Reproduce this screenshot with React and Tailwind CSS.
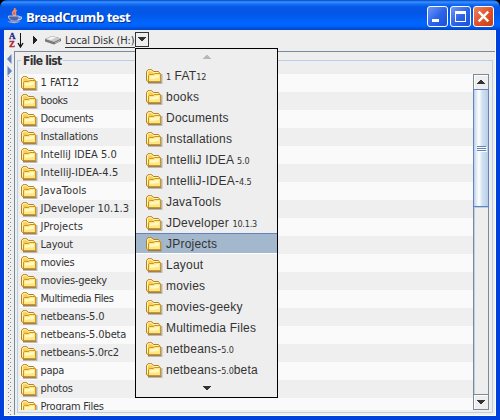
import React from 'react';

const files = [
  { name: '1 FAT12', track: 'tracking-[0px]' },
  { name: 'books', track: 'tracking-[-0.45px]' },
  { name: 'Documents', track: 'tracking-[-0.4px]' },
  { name: 'Installations', track: 'tracking-[-0.2px]' },
  { name: 'IntelliJ IDEA 5.0', track: 'tracking-[0.02px]' },
  { name: 'IntelliJ-IDEA-4.5', track: 'tracking-[0.1px]' },
  { name: 'JavaTools', track: 'tracking-[0.1px]' },
  { name: 'JDeveloper 10.1.3', track: 'tracking-[0px]' },
  { name: 'JProjects', track: 'tracking-[0.05px]' },
  { name: 'Layout', track: 'tracking-[-0.2px]' },
  { name: 'movies', track: 'tracking-[-0.3px]' },
  { name: 'movies-geeky', track: 'tracking-[-0.2px]' },
  { name: 'Multimedia Files', track: 'tracking-[-0.43px]' },
  { name: 'netbeans-5.0', track: 'tracking-[-0.12px]' },
  { name: 'netbeans-5.0beta', track: 'tracking-[-0.12px]' },
  { name: 'netbeans-5.0rc2', track: 'tracking-[-0.18px]' },
  { name: 'papa', track: 'tracking-[-0.3px]' },
  { name: 'photos', track: 'tracking-[-0.25px]' },
  { name: 'Program Files', track: 'tracking-[-0.25px]' },
];

function Folder() {
  return (
    <svg width="17" height="15" viewBox="0 0 17 15" className="block shrink-0">
      <path d="M2 14.2H15.8V5" stroke="#aaa79c" strokeWidth="1.2" fill="none" />
      <path d="M.5 11.5V2.5L2 .7H5.8L7.5 2.5H12.5L13.5 4V12.5H1.5Z" fill="#f8cf55" stroke="#b9801a" />
      <path d="M1.5 10.5V3L2.5 1.7H5.4L7.2 3.5H12.5" fill="none" stroke="#fff6c4" />
      <path d="M2.5 12.7V6.5L3.5 5.5H7.5L8.6 4.5H14.5V12.7Z" fill="#ffd95c" stroke="#c99526" />
      <path d="M3 12.2V7.2L4.2 6H8L9 5H14V12.2Z" fill="#ffe680" />
      <path d="M4 10V7H8.5L9.5 6H13V9Z" fill="#fff8c0" />
      <path d="M2 13.2H15" stroke="#94641a" />
    </svg>
  );
}

function Tri({ dir, color }) {
  return (
    <svg width="8" height="4" viewBox="0 0 8 4" shapeRendering="crispEdges" className="block">
      <path d={dir === 'up' ? 'M0 4H8V3H7V2H6V1H5V0H3V1H2V2H1V3H0Z' : 'M0 0H8V1H7V2H6V3H5V4H3V3H2V2H1V1H0Z'} fill={color} />
    </svg>
  );
}

function JavaCup() {
  return (
    <svg width="16" height="16" viewBox="0 0 16 16" className="block shrink-0">
      <path d="M7.5 0C9 3 4 4 6 6S6 8 7 9M9.5 2C6 5 10 5 8 8" fill="none" stroke="#ff8a62" strokeWidth="1.7" />
      <path d="M1.5 8H12V10C12 13 9 13 7 13S2 12 1.5 9Z" fill="#55639f" stroke="#c3cef5" strokeWidth=".9" />
      <path d="M12 9C16 8 15 12 10.5 12" fill="none" stroke="#bcc8f2" strokeWidth="1.3" />
      <path d="M0 13.2C3 15.8 11 15.8 14 13.2Z" fill="#bdc9f4" stroke="#40549c" strokeWidth=".5" />
    </svg>
  );
}

function TitleButton({ kind }) {
  return (
    <div className={'box-border h-[21px] w-[21px] rounded-[3px] border border-white bg-linear-to-br ' +
      (kind === 'close' ? 'from-[#ea8461] via-[#e2522a] to-[#c8400f]' : 'from-[#6f97f5] via-[#2e64ea] to-[#1a50d8]')}>
      <svg width="19" height="19" viewBox="0 0 19 19" className="block" shapeRendering={kind === 'close' ? 'auto' : 'crispEdges'}>
        {kind === 'min' && <path d="M4 12H11V15H4Z" fill="#fff" />}
        {kind === 'max' && <path fillRule="evenodd" d="M4 4H15V15H4ZM5 7V14H14V7Z" fill="#fff" />}
        {kind === 'close' && <path d="M4.7 4.7L14.3 14.3M14.3 4.7L4.7 14.3" stroke="#fff" strokeWidth="2.4" />}
      </svg>
    </div>
  );
}

function TitleBar() {
  return (
    <div className="flex h-[30px] shrink-0 items-start rounded-t-[7px] bg-[linear-gradient(#0344c8_0px,#3a93ff_2px,#1670f5_4px,#0558e5_7px,#0257e6_14px,#0066ff_23px,#0062fa_26px,#0043c9_30px)] pr-[6px] pl-[7px] pt-[6px]">
      <div className="pt-[2px]"><JavaCup /></div>
      <span className="ml-[3px] whitespace-nowrap pt-[2px] font-['Open_Sans','Noto_Sans',sans-serif] text-[13px] leading-[18px] font-bold tracking-[-0.44px] text-white [text-shadow:1px_1px_#0a2f8c]">BreadCrumb test</span>
      <div className="ml-auto flex gap-[2px]">
        <TitleButton kind="min" />
        <TitleButton kind="max" />
        <TitleButton kind="close" />
      </div>
    </div>
  );
}

function Toolbar() {
  return (
    <div className="flex h-[21px] shrink-0 items-start bg-[#eeeeee] pl-[5px]">
      <div className="flex w-[8px] flex-col pt-[2px] font-['Liberation_Serif',serif] text-[9px] leading-[8px] font-bold">
        <span className="text-[#22228c] [-webkit-text-stroke:0.3px_#22228c]">A</span>
        <span className="text-[#b02026] [-webkit-text-stroke:0.3px_#b02026]">Z</span>
      </div>
      <svg width="11" height="21" viewBox="0 0 11 21" className="block shrink-0">
        <path d="M3.5 3V17" stroke="#111" strokeWidth="1" />
        <path d="M1 13L3.5 17L6 13" fill="none" stroke="#111" strokeWidth="1.4" />
      </svg>
      <svg width="5" height="8" viewBox="0 0 5 8" className="mt-[6px] ml-[5px] block" shapeRendering="crispEdges"><path d="M0 0L4 4L0 8Z" fill="#222" /></svg>
      <svg width="17" height="11" viewBox="0 0 17 11" className="mt-[5px] ml-[7px] block">
        <path d="M0 4L7 1L16 3.5V6L9 9.5L0 6.5Z" fill="#777" />
        <path d="M0 4L7 1L16 3.5L9 7Z" fill="#c9c9c9" />
        <path d="M2 4L7 1.6L11 2.6L6 5Z" fill="#f4f4f4" />
        <path d="M10 8L15 5.5" stroke="#bbb" />
      </svg>
      <span className="mt-[2px] ml-[3px] h-[16px] w-[70px] whitespace-nowrap border-b border-[#333] font-['DejaVu_Sans_Condensed','DejaVu_Sans',sans-serif] text-[11px] leading-[17px] tracking-[-0.15px] text-[#333]">Local Disk (H:)</span>
      <div className="mt-[2px] flex h-[15px] w-[14px] items-start justify-center border border-[#333] pt-[4px]"><Tri dir="down" color="#333" /></div>
    </div>
  );
}

function Divider() {
  return (
    <div className="flex w-[10px] shrink-0 flex-col border-l border-white bg-[#eeeeee]">
      <svg width="9" height="25" viewBox="0 0 9 25" className="block shrink-0">
        <path d="M6.5 3V13L2 8Z" fill="#6382bf" />
        <path d="M2.5 15V25L7 20Z" fill="#6382bf" />
      </svg>
      <div className="ml-[3px] w-[4px] flex-1 bg-[radial-gradient(circle_at_0.5px_0.5px,#8a8a8a_0.6px,transparent_0.7px),radial-gradient(circle_at_2.5px_2.5px,#8a8a8a_0.6px,transparent_0.7px)] bg-[size:4px_4px]" />
    </div>
  );
}

function ScrollBar() {
  return (
    <div className="flex w-[16px] shrink-0 flex-col border-x border-[#7a8a99] bg-[#eeeeee]">
      <div className="flex h-[15px] items-center justify-center border-t border-[#7a8a99] bg-[#eeeeee] shadow-[inset_1px_1px_#fff]"><Tri dir="up" color="#333" /></div>
      <div className="-mx-px flex h-[118px] flex-col items-center justify-center gap-px border border-[#6382bf] bg-[linear-gradient(90deg,#b8cfe5_0px,#dbe8f4_2px,#fff_5px,#d4e2f0_8px,#b8cfe5_14px)]">
        <i className="h-px w-[9px] bg-[#6382bf] shadow-[1px_1px_#fff]" />
        <i className="h-px w-[9px] bg-[#6382bf] shadow-[1px_1px_#fff]" />
        <i className="h-px w-[9px] bg-[#6382bf] shadow-[1px_1px_#fff]" />
      </div>
      <div className="flex-1 border-t border-l border-[#b8cfe5]" />
      <div className="flex h-[16px] items-center justify-center border-y border-[#7a8a99] shadow-[inset_1px_1px_#fff]"><Tri dir="down" color="#333" /></div>
    </div>
  );
}

function FileList() {
  return (
    <div className="flex min-w-0 flex-1 border-t border-l border-[#7a8a99] bg-[#eeeeee] pt-[8px] pr-[2px] pb-[2px] pl-[2px]">
      <div className="flex min-w-0 flex-1 flex-col border border-[#b8cfe5] pr-[3px] pb-[2px] pl-[2px]">
        <div className="-mt-[9px] flex h-[22px] shrink-0">
          <span className="ml-[1px] h-[18px] w-[42px] whitespace-nowrap bg-[#eeeeee] pl-[2px] font-['DejaVu_Sans_Condensed','DejaVu_Sans',sans-serif] text-[12px] leading-[19px] font-bold tracking-[-0.7px] text-[#333]">File list</span>
        </div>
        <div className="flex min-h-0 flex-1">
          <div className="min-w-0 flex-1 overflow-hidden">
            {files.map(({ name, track }, i) => (
              <div key={name} className={'flex h-[18px] items-center pl-px ' + (i % 2 ? 'bg-[#efefef]' : 'bg-[#fafafa]')}>
                <div className="pt-px"><Folder /></div>
                <span className={"ml-[2.5px] whitespace-nowrap font-['DejaVu_Sans_Condensed','DejaVu_Sans',sans-serif] text-[11px] leading-[18px] text-[#333] " + track}>{name}</span>
              </div>
            ))}
          </div>
          <ScrollBar />
        </div>
      </div>
    </div>
  );
}

function MenuLabel({ text }) {
  return text.split(/([\d.]+)/).map((part, i) =>
    i % 2 ? <span key={i} className="font-['DejaVu_Sans_Condensed','DejaVu_Sans',sans-serif] text-[9px] leading-none tracking-[-0.2px]">{part}</span> : part
  );
}

function FolderMenu() {
  return (
    <div className="absolute top-[48px] left-[135px] flex h-[350px] w-[143px] flex-col border border-black bg-[#eeeeee]">
      <div className="flex h-[16px] items-center justify-center"><Tri dir="up" color="#b8b8b8" /></div>
      {files.slice(0, 15).map(({ name }) => (
        <div key={name} className={'flex h-[21px] items-center border-y pl-[10px] ' + (name === 'JProjects' ? 'border-t-[#6382bf] border-b-white bg-[#a3b8cc]' : 'border-transparent')}>
          <div className="pt-px"><Folder /></div>
          <span className="ml-[3px] whitespace-pre font-['Liberation_Sans',sans-serif] text-[12px] leading-[18px] tracking-[0.22px] text-[#333]"><MenuLabel text={name} /></span>
        </div>
      ))}
      <div className="flex h-[16px] items-center justify-center"><Tri dir="down" color="#333" /></div>
    </div>
  );
}

export default function App() {
  return (
    <div className="relative flex h-[420px] w-[500px] flex-col overflow-hidden bg-black">
      <TitleBar />
      <div className="flex min-h-0 flex-1 border-x-4 border-b-4 border-[#0040dc] bg-[#eeeeee]">
        <div className="flex min-w-0 flex-1 flex-col border-r border-b border-white">
          <Toolbar />
          <div className="flex min-h-0 flex-1">
            <Divider />
            <FileList />
          </div>
        </div>
      </div>
      <FolderMenu />
    </div>
  );
}
